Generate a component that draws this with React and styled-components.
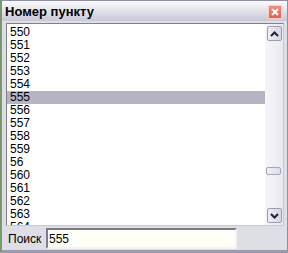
import React from "react";
import styled, { createGlobalStyle } from "styled-components";

const Global = createGlobalStyle`
  body {
    margin: 0;
    font-family: "Liberation Sans", Arial, sans-serif;
  }
`;

const Window = styled.div`
  width: 288px;
  height: 253px;
  box-sizing: border-box;
  border: 1px solid #8e8ea4;
  border-left: 2px solid #7c9870;
  border-bottom: 3px solid #9a9ab0;
  background: #dedee6;
  display: flex;
  flex-direction: column;
`;

const TitleBar = styled.div`
  height: 20px;
  flex: none;
  display: flex;
  align-items: center;
  justify-content: space-between;
  padding: 0 5px 0 3px;
  background: linear-gradient(#fbfbfd, #e4e4ec 45%, #c9c9d6);
`;

const Title = styled.span`
  font-weight: bold;
  font-size: 13px;
  color: #000;
  padding-top: 1px;
`;

const CloseBtn = styled.div`
  width: 12px;
  height: 12px;
  margin-top: 2px;
  border: 1px solid #f4d0c8;
  background: linear-gradient(#f2907c, #e0604c);
  display: flex;
  align-items: center;
  justify-content: center;
`;

const Body = styled.div`
  flex: 1;
  display: flex;
  flex-direction: column;
  padding: 2px 3px 0 4px;
  min-height: 0;
`;

const ListBox = styled.div`
  height: 203px;
  flex: none;
  display: flex;
  background: #fff;
  border: 1px solid #808090;
  border-right-color: #c8c8d4;
  border-bottom-color: #c8c8d4;
  box-sizing: border-box;
`;

const Items = styled.div`
  flex: 1;
  overflow: hidden;
  padding-top: 2px;
`;

const Row = styled.div`
  height: 13px;
  line-height: 13px;
  font-size: 12px;
  padding-left: 3px;
  color: #000;
  background: ${p => (p.$selected ? "#b4b4c2" : "transparent")};
`;

const ScrollBar = styled.div`
  width: 18px;
  flex: none;
  display: flex;
  flex-direction: column;
  align-items: center;
  padding: 2px 0 2px;
  box-sizing: border-box;
  background: linear-gradient(to right, #f6f6fa, #e8e8f0);
`;

const ArrowBtn = styled.div`
  width: 15px;
  height: 15px;
  box-sizing: border-box;
  border: 1px solid #9c9cb0;
  border-radius: 2px;
  background: linear-gradient(to right, #eeeef6, #d6d6e2);
  display: flex;
  align-items: center;
  justify-content: center;
`;

const Track = styled.div`
  flex: 1;
  width: 100%;
  position: relative;
`;

const Thumb = styled.div`
  position: absolute;
  left: 1px;
  top: 126px;
  width: 15px;
  height: 8px;
  box-sizing: border-box;
  border: 1px solid #a4a4b8;
  border-radius: 2px;
  background: linear-gradient(to right, #f0f0f8, #dcdce8);
`;

const Footer = styled.div`
  flex: 1;
  display: flex;
  align-items: center;
  padding: 1px 0 0 2px;
`;

const Label = styled.span`
  font-size: 12px;
  color: #000;
  width: 38px;
`;

const Input = styled.input`
  width: 191px;
  height: 21px;
  box-sizing: border-box;
  border: 2px solid;
  border-color: #7c7c88 #f4f4f0 #f4f4f0 #7c7c88;
  background: #fffff8;
  font-family: "Liberation Sans", Arial, sans-serif;
  font-size: 12px;
  padding: 0 1px;
  outline: none;
  color: #000;
`;

const Chevron = ({ up }) => (
  <svg width="9" height="6" viewBox="0 0 9 6">
    <path
      d={up ? "M1 5 L4.5 1.5 L8 5" : "M1 1 L4.5 4.5 L8 1"}
      fill="none"
      stroke="#20203a"
      strokeWidth="2"
    />
  </svg>
);

const rows = ["550", "551", "552", "553", "554", "555", "556", "557", "558", "559", "56", "560", "561", "562", "563", "564"];

export default function App() {
  return (
    <>
      <Global />
      <Window>
        <TitleBar>
          <Title>Номер пункту</Title>
          <CloseBtn>
            <svg width="8" height="8" viewBox="0 0 8 8">
              <path d="M1 1 L7 7 M7 1 L1 7" stroke="#fff" strokeWidth="2" />
            </svg>
          </CloseBtn>
        </TitleBar>
        <Body>
          <ListBox>
            <Items>
              {rows.map(r => (
                <Row key={r} $selected={r === "555"}>{r}</Row>
              ))}
            </Items>
            <ScrollBar>
              <ArrowBtn><Chevron up /></ArrowBtn>
              <Track><Thumb /></Track>
              <ArrowBtn><Chevron /></ArrowBtn>
            </ScrollBar>
          </ListBox>
          <Footer>
            <Label>Поиск</Label>
            <Input defaultValue="555" />
          </Footer>
        </Body>
      </Window>
    </>
  );
}
